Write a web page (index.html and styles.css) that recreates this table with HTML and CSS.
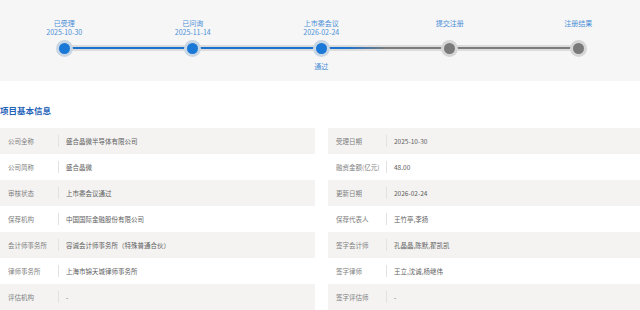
FILE: index.html
```html
<!DOCTYPE html>
<html lang="zh">
<head>
<meta charset="utf-8">
<link rel="stylesheet" href="styles.css">
</head>
<body>
<div class="progress">
  <div class="steps">
    <div class="step done">
      <div class="step-text"><div>已受理</div><div>2025-10-30</div></div>
      <span class="dot"></span>
    </div>
    <div class="step done">
      <div class="step-text"><div>已问询</div><div>2025-11-14</div></div>
      <span class="dot"></span>
    </div>
    <div class="step done">
      <div class="step-text"><div>上市委会议</div><div>2026-02-24</div></div>
      <span class="dot"></span>
      <div class="step-note">通过</div>
    </div>
    <div class="step">
      <div class="step-text"><div>提交注册</div></div>
      <span class="dot"></span>
    </div>
    <div class="step">
      <div class="step-text"><div>注册结果</div></div>
      <span class="dot"></span>
    </div>
  </div>
</div>

<h2 class="title">项目基本信息</h2>

<div class="info">
  <div class="row"><span class="label">公司全称</span><span class="value">盛合晶微半导体有限公司</span></div>
  <div class="row"><span class="label">受理日期</span><span class="value">2025-10-30</span></div>
  <div class="row"><span class="label">公司简称</span><span class="value">盛合晶微</span></div>
  <div class="row"><span class="label">融资金额(亿元)</span><span class="value">48.00</span></div>
  <div class="row"><span class="label">审核状态</span><span class="value">上市委会议通过</span></div>
  <div class="row"><span class="label">更新日期</span><span class="value">2026-02-24</span></div>
  <div class="row"><span class="label">保荐机构</span><span class="value">中国国际金融股份有限公司</span></div>
  <div class="row"><span class="label">保荐代表人</span><span class="value">王竹亭,李扬</span></div>
  <div class="row"><span class="label">会计师事务所</span><span class="value">容诚会计师事务所（特殊普通合伙）</span></div>
  <div class="row"><span class="label">签字会计师</span><span class="value">孔晶晶,陈默,翟凯凯</span></div>
  <div class="row"><span class="label">律师事务所</span><span class="value">上海市锦天城律师事务所</span></div>
  <div class="row"><span class="label">签字律师</span><span class="value">王立,沈诚,杨继伟</span></div>
  <div class="row"><span class="label">评估机构</span><span class="value">-</span></div>
  <div class="row"><span class="label">签字评估师</span><span class="value">-</span></div>
</div>
</body>
</html>
```

FILE: styles.css
```css
html, body {
  margin: 0;
  padding: 0;
  background: #ffffff;
  overflow: hidden;
  font-family: "Noto Sans CJK SC", "Microsoft YaHei", sans-serif;
}

.progress {
  background: #f6f6f6;
  height: 81px;
  overflow: hidden;
}

.steps {
  position: relative;
  display: grid;
  grid-template-columns: repeat(5, 128.5px);
  padding-top: 19px;
}

.steps::before {
  content: "";
  position: absolute;
  left: 64px;
  width: 514px;
  top: 45px;
  height: 6px;
  background: #dcdcdc;
}

.steps::after {
  content: "";
  position: absolute;
  left: 64px;
  width: 514px;
  top: 47px;
  height: 2px;
  background: linear-gradient(to right, #1a72cc 0%, #1a72cc 55%, #7c7c7c 63%, #7c7c7c 100%);
}

.step {
  display: flex;
  flex-direction: column;
  align-items: center;
  position: relative;
  z-index: 1;
}

.step-text {
  height: 18px;
  font-size: 7px;
  line-height: 9px;
  color: #4a8fd6;
  text-align: center;
}

.dot {
  margin-top: 6px;
  width: 11px;
  height: 11px;
  border-radius: 50%;
  background: #7a7a7a;
  box-shadow: 0 0 0 3px #d6d6d6;
}

.step.done .dot {
  background: #1a78d6;
  box-shadow: 0 0 0 3px #c9d6e3;
}

.step-note {
  margin-top: 8px;
  font-size: 7px;
  line-height: 9px;
  color: #4a8fd6;
}

.title {
  margin: 23px 0 12px;
  font-size: 8.5px;
  line-height: 12px;
  font-weight: bold;
  color: #1f63b8;
}

.info {
  display: grid;
  grid-template-columns: 315px 312px;
  column-gap: 13px;
}

.row {
  display: flex;
  align-items: center;
  height: 26px;
  font-size: 6.5px;
}

.row:nth-child(4n+1),
.row:nth-child(4n+2) {
  background: #f4f3f2;
}

.label {
  width: 50px;
  padding-left: 8px;
  color: #808080;
  white-space: nowrap;
}

.value {
  border-left: 1px solid #e2e2e2;
  height: 12px;
  line-height: 12px;
  padding-left: 7px;
  color: #606060;
  white-space: nowrap;
}
```
